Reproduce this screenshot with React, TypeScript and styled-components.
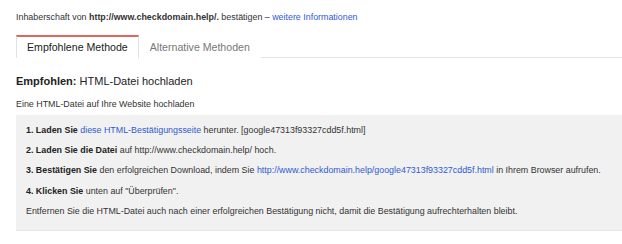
import React from "react";
import styled, { createGlobalStyle } from "styled-components";

const Global = createGlobalStyle`
  html, body { margin: 0; padding: 0; background: #fff; }
  body { font-family: "Liberation Sans", Arial, sans-serif; color: #222; }
`;

const Page = styled.div`
  padding: 11px 0 0 16px;
  width: 606px;
`;

const Intro = styled.div`
  font-size: 8.9px;
  line-height: 12px;
  color: #333;
`;

const Link = styled.a`
  color: #2f5ad0;
  text-decoration: none;
`;

const Tabs = styled.div`
  display: flex;
  margin-top: 12px;
  border-bottom: 1px solid #e2e2e2;
  height: 22px;
`;

const Tab = styled.div<{ $active?: boolean }>`
  font-size: 10.6px;
  line-height: 20px;
  padding: 0 10px;
  color: ${(p) => (p.$active ? "#222" : "#777")};
  border-top: 2px solid ${(p) => (p.$active ? "#e0675a" : "transparent")};
  border-left: 1px solid ${(p) => (p.$active ? "#e2e2e2" : "transparent")};
  border-right: 1px solid ${(p) => (p.$active ? "#e2e2e2" : "transparent")};
  background: #fff;
  margin-bottom: -1px;
  height: 21px;
`;

const Heading = styled.h2`
  margin: 16px 0 0;
  font-size: 11px;
  line-height: 15px;
  font-weight: normal;
  color: #222;
  b { font-weight: bold; }
`;

const Sub = styled.div`
  margin-top: 9px;
  font-size: 8.9px;
  line-height: 12px;
  color: #333;
`;

const Box = styled.div`
  margin-top: 5px;
  background: #f1f1f1;
  border-bottom: 1px solid #e6e6e6;
  padding: 9px 10px 16px;
  height: 90px;
`;

const Steps = styled.ol`
  list-style: none;
  margin: 0;
  padding: 0;
`;

const Step = styled.li`
  font-size: 8.9px;
  line-height: 12px;
  color: #333;
  margin-bottom: 8.2px;
  b { color: #222; }
`;

const Note = styled.p`
  margin: 0;
  font-size: 8.9px;
  line-height: 12px;
  color: #333;
`;

export default function App() {
  return (
    <>
      <Global />
      <Page>
        <Intro>
          Inhaberschaft von <b>http://www.checkdomain.help/.</b> bestätigen –{" "}
          <Link href="#">weitere Informationen</Link>
        </Intro>
        <Tabs>
          <Tab $active>Empfohlene Methode</Tab>
          <Tab>Alternative Methoden</Tab>
        </Tabs>
        <Heading>
          <b>Empfohlen:</b> HTML-Datei hochladen
        </Heading>
        <Sub>Eine HTML-Datei auf Ihre Website hochladen</Sub>
        <Box>
          <Steps>
            <Step>
              <b>1. Laden Sie</b> <Link href="#">diese HTML-Bestätigungsseite</Link> herunter.
              [google47313f93327cdd5f.html]
            </Step>
            <Step>
              <b>2. Laden Sie die Datei</b> auf http://www.checkdomain.help/ hoch.
            </Step>
            <Step>
              <b>3. Bestätigen Sie</b> den erfolgreichen Download, indem Sie{" "}
              <Link href="#">http://www.checkdomain.help/google47313f93327cdd5f.html</Link> in
              Ihrem Browser aufrufen.
            </Step>
            <Step>
              <b>4. Klicken Sie</b> unten auf "Überprüfen".
            </Step>
          </Steps>
          <Note>
            Entfernen Sie die HTML-Datei auch nach einer erfolgreichen Bestätigung nicht, damit die
            Bestätigung aufrechterhalten bleibt.
          </Note>
        </Box>
      </Page>
    </>
  );
}
